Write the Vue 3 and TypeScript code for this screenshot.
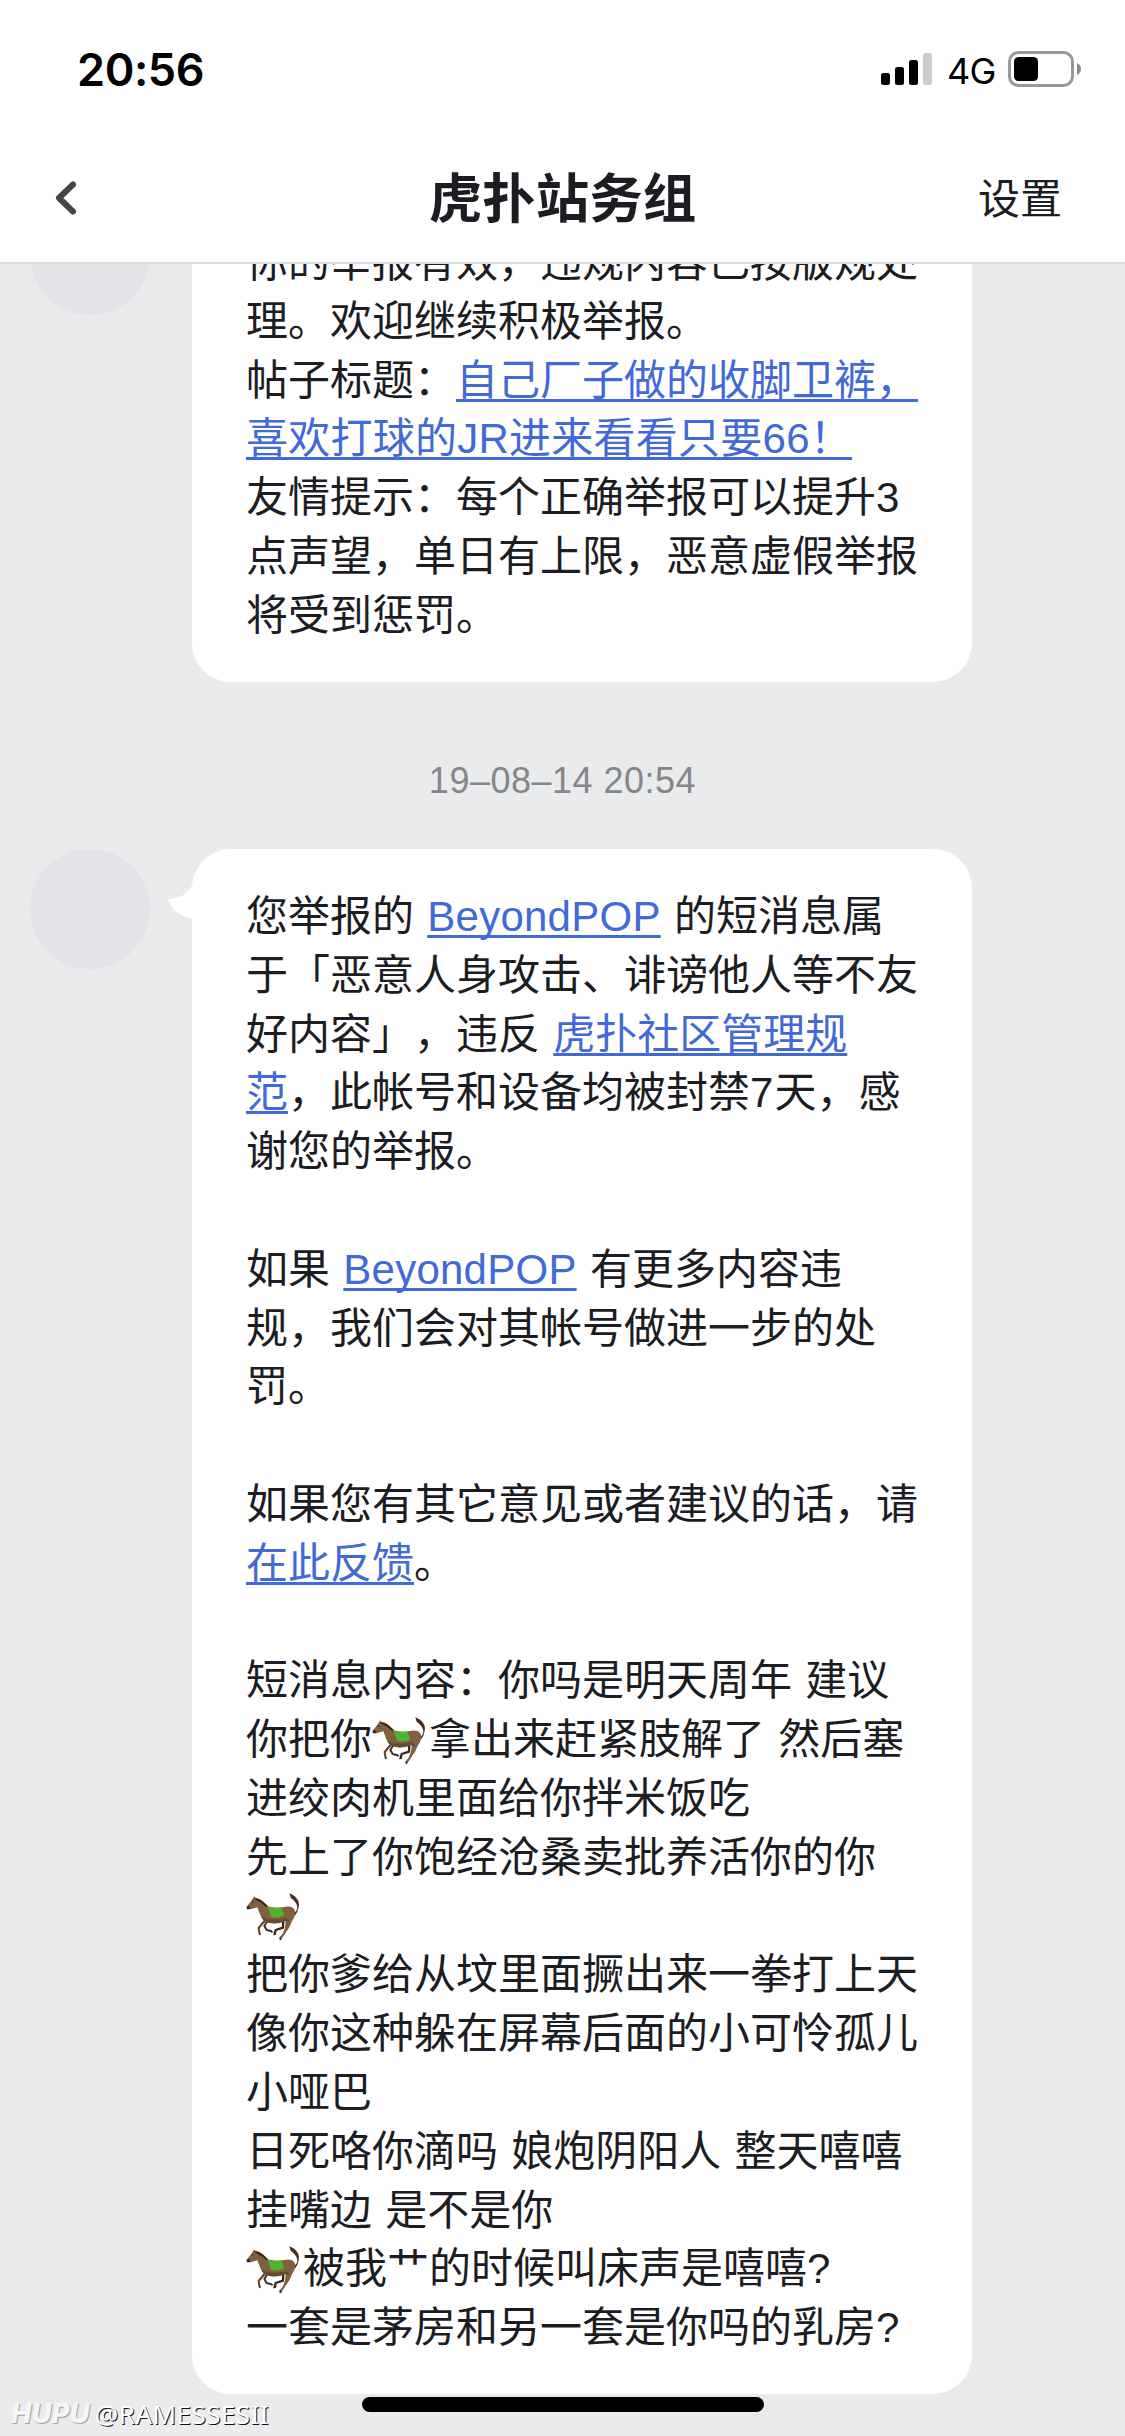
<script setup lang="ts">
type Part = { text: string; kind?: 'link' | 'num' | 'horse'; latin?: boolean }
type Message = { id: number; time?: string; lines: Part[][] }

const t = (text: string): Part => ({ text })
const link = (text: string): Part => ({ text, kind: 'link', latin: /[A-Za-z]/.test(text) })
const num = (text: string): Part => ({ text, kind: 'num' })
const horse: Part = { text: '', kind: 'horse' }

const messages: Message[] = [
  {
    id: 1,
    lines: [
      [t('你的举报有效，违规内容已按版规处')],
      [t('理。欢迎继续积极举报。')],
      [t('帖子标题：'), link('自己厂子做的收脚卫裤，')],
      [link('喜欢打球的JR进来看看只要66！')],
      [t('友情提示：每个正确举报可以提升'), num('3')],
      [t('点声望，单日有上限，恶意虚假举报')],
      [t('将受到惩罚。')],
    ],
  },
  {
    id: 2,
    time: '19–08–14 20:54',
    lines: [
      [t('您举报的 '), link('BeyondPOP'), t(' 的短消息属')],
      [t('于「恶意人身攻击、诽谤他人等不友')],
      [t('好内容」，违反 '), link('虎扑社区管理规')],
      [link('范'), t('，此帐号和设备均被封禁'), num('7'), t('天，感')],
      [t('谢您的举报。')],
      [],
      [t('如果 '), link('BeyondPOP'), t(' 有更多内容违')],
      [t('规，我们会对其帐号做进一步的处')],
      [t('罚。')],
      [],
      [t('如果您有其它意见或者建议的话，请')],
      [link('在此反馈'), t('。')],
      [],
      [t('短消息内容：你吗是明天周年 建议')],
      [t('你把你'), horse, t('拿出来赶紧肢解了 然后塞')],
      [t('进绞肉机里面给你拌米饭吃')],
      [t('先上了你饱经沧桑卖批养活你的你')],
      [horse],
      [t('把你爹给从坟里面撅出来一拳打上天')],
      [t('像你这种躲在屏幕后面的小可怜孤儿')],
      [t('小哑巴')],
      [t('日死咯你滴吗 娘炮阴阳人 整天嘻嘻')],
      [t('挂嘴边 是不是你')],
      [horse, t('被我艹的时候叫床声是嘻嘻?')],
      [t('一套是茅房和另一套是你吗的乳房?')],
    ],
  },
]
</script>

<template>
  <div class="screen">
    <header class="top">
      <div class="status">
        <span class="clock">20:56</span>
        <div class="indicators">
          <svg class="signal" width="51" height="32" viewBox="0 0 51 32">
            <rect x="0" y="20" width="9" height="12" rx="2.5" />
            <rect x="14" y="14" width="9" height="18" rx="2.5" />
            <rect x="28" y="7" width="9" height="25" rx="2.5" />
            <rect x="42" y="0" width="9" height="32" rx="2.5" fill="#ccc" />
          </svg>
          <span class="network">4G</span>
          <svg class="battery" width="74" height="36" viewBox="0 0 74 36">
            <rect x="1.5" y="1.5" width="63" height="33" rx="9" fill="none" stroke="#999" stroke-width="3" />
            <rect x="6" y="6" width="24" height="24" rx="4.5" />
            <path d="M69 12 Q73 14 73 18 Q73 22 69 24 Z" fill="#8c8c8c" />
          </svg>
        </div>
      </div>
      <nav class="nav">
        <svg class="back" width="24" height="36" viewBox="0 0 24 36">
          <path d="M19 4.5 L5 18 L19 31.5" fill="none" stroke="#45464a" stroke-width="6" stroke-linecap="round" stroke-linejoin="round" />
        </svg>
        <h1 class="title">虎扑站务组</h1>
        <span class="settings">设置</span>
      </nav>
    </header>

    <main class="thread">
      <template v-for="m in messages" :key="m.id">
        <div v-if="m.time" class="time">{{ m.time }}</div>
        <div class="message">
          <div class="avatar"></div>
          <div class="bubble">
            <svg class="tail" width="32" height="52" viewBox="0 0 32 52">
              <path d="M32 0 L27 5 C24 18 15 27 1 27 Q-1 28 1 30 C6 39 14 46 25 46.500 L32 47 Z" fill="#fff" />
            </svg>
            <p v-for="(line, i) in m.lines" :key="i" class="line">
              <template v-for="(p, j) in line" :key="j">
                <svg v-if="p.kind === 'horse'" class="horse" viewBox="0 0 171 150">
                  <path d="M143 64 C162 52 155 32 134 17 L130 4 C149 12 163 26 158 45 Q156 60 146 72 Z" fill="#4c2e20" />
                  <path d="M58 84 L38 108 L41 127" fill="none" stroke="#62402b" stroke-width="6" stroke-linejoin="round" />
                  <path d="M112 80 L111 107 L89 114 L86 128" fill="none" stroke="#3d2418" stroke-width="7" stroke-linejoin="round" />
                  <path d="M66 84 L55 102 L62 114 L77 118" fill="none" stroke="#4a2d20" stroke-width="6" stroke-linejoin="round" />
                  <path d="M21 19 L25 13 L29 20 Q48 23 64 43 Q88 50 114 45 Q142 40 147 57 Q149 74 138 88 L130 106 L115 128 L105 143 L98 139 L110 125 L117 107 L119 86 Q97 98 68 92 Q48 86 43 69 L34 46 L13 52 L3 51 L2 44 L14 29 Z" fill="#80603f" />
                  <path d="M46 75 Q77 88 121 79 L132 88 Q125 94 118 87 Q87 100 61 90 Q50 86 46 75 Z" fill="#6a4a2e" />
                  <path d="M25 17 Q41 18 52 29 L66 42 L61 46 Q48 32 29 24 Z" fill="#3d271d" />
                  <path d="M65 44 Q88 50 107 46 L114 71 Q94 79 76 75 Z" fill="#4eb42c" />
                  <path d="M2 44 L9 42 L13 51 L3 52 Z M40 121 L45 128 L40 130 Z M75 115 L83 120 L76 122 Z M84 122 L88 129 L82 130 Z M102 136 L107 141 L101 146 Z" fill="#2d1b17" />
                  <circle cx="20" cy="30" r="2" fill="#1d1412" />
                </svg>
                <span v-else :class="[p.kind, { latin: p.latin }]">{{ p.text }}</span>
              </template>
            </p>
          </div>
        </div>
      </template>
    </main>

    <div class="watermark"><b class="brand">HUPU</b><span>@RAMESSESII</span></div>
    <div class="home"></div>
  </div>
</template>

<style>
body {
  margin: 0;
}
</style>

<style scoped>
.screen {
  position: relative;
  display: flex;
  flex-direction: column;
  width: 1125px;
  height: 2436px;
  overflow: hidden;
  background: #eaebed;
  color: #1c1d22;
  font-family: "Liberation Sans", "Noto Sans CJK SC", sans-serif;
  text-spacing-trim: space-all;
}
.top {
  box-sizing: border-box;
  flex: none;
  height: 264px;
  background: #fff;
  border-bottom: 2px solid #dadbdd;
}
.status {
  display: flex;
  justify-content: space-between;
  align-items: center;
  height: 138px;
  padding: 0 43px 0 77px;
  color: #000;
}
.clock {
  padding-top: 1px;
  font: 600 45px/60px Inter, sans-serif;
  letter-spacing: -0.4px;
}
.indicators {
  display: flex;
  align-items: center;
}
.network {
  width: 48px;
  margin: 3px 13px 0 15px;
  font: 400 36px/40px Inter, sans-serif;
  letter-spacing: -0.8px;
}
.nav {
  display: grid;
  grid-template-columns: 200px 1fr 200px;
  align-items: center;
  height: 120px;
}
.back {
  margin-left: 54px;
}
.title {
  margin: 0;
  padding-top: 3px;
  text-align: center;
  font-size: 53.5px;
  font-weight: 600;
  line-height: 80px;
}
.settings {
  padding: 3px 63px 0 0;
  text-align: right;
  font-size: 42px;
  line-height: 60px;
}
.thread {
  flex: 1;
  min-height: 0;
  overflow: hidden;
}
.message {
  display: flex;
  align-items: flex-start;
  padding-left: 30px;
}
.message:first-child {
  margin-top: -69px;
}
.avatar {
  width: 120px;
  height: 120px;
  border-radius: 50%;
  background: #e3e4e8;
}
.bubble {
  position: relative;
  box-sizing: border-box;
  width: 780px;
  margin-left: 42px;
  padding: 39px 0 36px 54px;
  border-radius: 39px;
  background: #fff;
}
.tail {
  position: absolute;
  left: -24px;
  top: 23px;
}
.line {
  display: flex;
  align-items: center;
  height: 58.8px;
  margin: 0;
  font-size: 42px;
  line-height: 58.8px;
  white-space: pre;
  word-spacing: 1.6px;
}
.link {
  color: #4169d8;
  text-decoration: underline;
  text-decoration-thickness: 3px;
  text-underline-offset: 4px;
  text-decoration-skip-ink: none;
}
.latin {
  letter-spacing: 0.25px;
}
.num {
  letter-spacing: 1px;
}
.horse {
  width: 57px;
  height: 50px;
}
.time {
  height: 167.4px;
  line-height: 197px;
  text-align: center;
  font-size: 36px;
  letter-spacing: 0.5px;
  color: #85868b;
}
.watermark {
  position: absolute;
  left: 11px;
  top: 2396px;
  display: flex;
  align-items: center;
  height: 36px;
  color: #fff;
  font: 26px/36px "Noto Sans", sans-serif;
  letter-spacing: 0.45px;
  text-shadow: 1px 1px 0 #111;
}
.brand {
  width: 84px;
  font: italic 800 27px/36px Inter, sans-serif;
  color: #f6f6f7;
  text-shadow: 1px 1px 1px #999;
}
.home {
  position: absolute;
  left: 362px;
  top: 2397px;
  width: 402px;
  height: 15px;
  border-radius: 8px;
  background: #000;
}
</style>
